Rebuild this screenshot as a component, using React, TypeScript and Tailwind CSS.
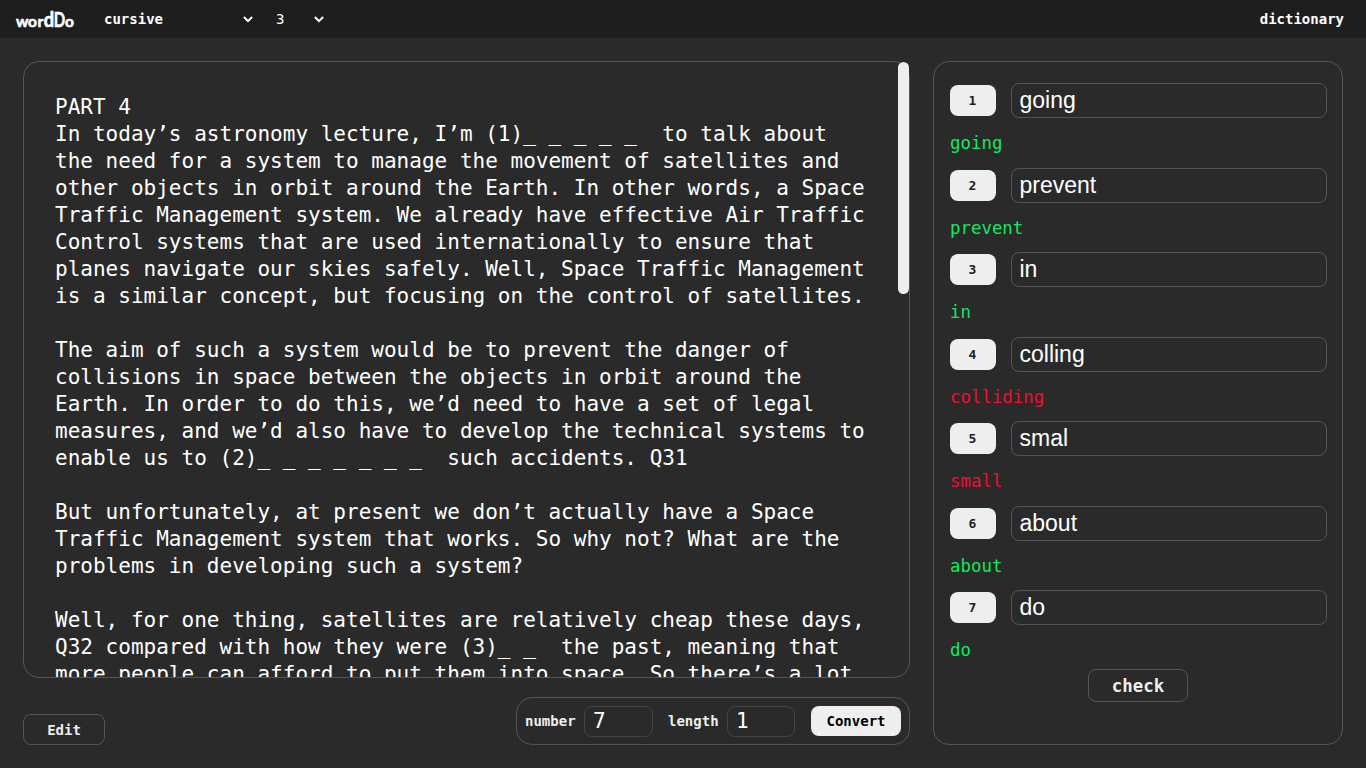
const mono = "font-['DejaVu_Sans_Mono',monospace]";

const lines = [
  "PART 4",
  "In today’s astronomy lecture, I’m (1)_ _ _ _ _  to talk about",
  "the need for a system to manage the movement of satellites and",
  "other objects in orbit around the Earth. In other words, a Space",
  "Traffic Management system. We already have effective Air Traffic",
  "Control systems that are used internationally to ensure that",
  "planes navigate our skies safely. Well, Space Traffic Management",
  "is a similar concept, but focusing on the control of satellites.",
  "",
  "The aim of such a system would be to prevent the danger of",
  "collisions in space between the objects in orbit around the",
  "Earth. In order to do this, we’d need to have a set of legal",
  "measures, and we’d also have to develop the technical systems to",
  "enable us to (2)_ _ _ _ _ _ _  such accidents. Q31",
  "",
  "But unfortunately, at present we don’t actually have a Space",
  "Traffic Management system that works. So why not? What are the",
  "problems in developing such a system?",
  "",
  "Well, for one thing, satellites are relatively cheap these days,",
  "Q32 compared with how they were (3)_ _  the past, meaning that",
  "more people can afford to put them into space. So there’s a lot",
];

const answers = [
  { typed: "going", correct: "going" },
  { typed: "prevent", correct: "prevent" },
  { typed: "in", correct: "in" },
  { typed: "colling", correct: "colliding" },
  { typed: "smal", correct: "small" },
  { typed: "about", correct: "about" },
  { typed: "do", correct: "do" },
];

function Chevron() {
  return (
    <svg width="10" height="7" viewBox="0 0 10 7" fill="none" stroke="#fff" strokeWidth="2">
      <path d="M0.9 1L5 5.1L9.1 1" />
    </svg>
  );
}

function Logo() {
  return (
    <svg
      className="ml-4 mr-[30px] shrink-0 overflow-visible"
      width="58"
      height="38"
      viewBox="0 0 58 38"
      fill="#fff"
      stroke="#fff"
      strokeWidth="0.6"
      strokeLinejoin="round"
      fontFamily="Lato, sans-serif"
      fontWeight="700"
    >
      <text y="26.5">
        <tspan x="0" fontSize="15.5">w</tspan>
        <tspan x="12" fontSize="15.5">o</tspan>
        <tspan x="21.5" fontSize="15.5">r</tspan>
      </text>
      <text transform="translate(27.7 26.5) scale(.92 1)" fontSize="20">d</text>
      <text transform="translate(37.8 26.5) scale(.7 1)" fontSize="21.5">D</text>
      <text x="49" y="26.5" fontSize="15.5">o</text>
    </svg>
  );
}

export default function App() {
  return (
    <div className={`flex h-[768px] w-[1366px] flex-col overflow-hidden bg-[#2a2a2a] text-white ${mono}`}>
      <header className="flex h-[38px] shrink-0 items-center bg-[#1e1e1e] text-[14px] leading-none">
        <Logo />
        <div className="flex w-[149px] items-center justify-between font-bold">
          <span>cursive</span>
          <Chevron />
        </div>
        <div className="ml-[23px] flex w-[48px] items-center justify-between">
          <span>3</span>
          <Chevron />
        </div>
        <span className="mr-[22px] ml-auto font-bold">dictionary</span>
      </header>

      <main className="flex min-h-0 flex-1 gap-[23px] px-[23px] pt-[23px] pb-[23px]">
        <section className="flex w-[887px] flex-col">
          <div className="relative h-[617px] shrink-0">
            <div className="h-full overflow-hidden rounded-2xl border border-[#555] px-[31px] pt-[31px]">
              {lines.map((l, i) => (
                <div key={i} className="h-[27px] text-[21.03px] leading-[27px] whitespace-pre">{l}</div>
              ))}
            </div>
            <div className="absolute top-px right-px h-[232px] w-[11px] rounded-full bg-[#eee]" />
          </div>
          <div className="mt-[19px] flex justify-between text-[14px] font-bold text-[#eee]">
            <button className="mt-[17px] h-[31px] w-[82px] rounded-lg border border-[#555] pt-px">Edit</button>
            <div className="flex h-[48px] w-[394px] items-center rounded-2xl border border-[#555] pl-2">
              <span className="w-[59px] shrink-0">number</span>
              <div className="flex h-[31px] w-[69px] shrink-0 items-center rounded-lg border border-[#444] pt-0.5 pl-2 text-[21px] font-normal text-white">7</div>
              <span className="ml-[15px] w-[59px] shrink-0">length</span>
              <div className="flex h-[31px] w-[68px] shrink-0 items-center rounded-lg border border-[#444] pt-0.5 pl-2 text-[21px] font-normal text-white">1</div>
              <button className="ml-4 h-[30px] w-[90px] shrink-0 rounded-lg bg-[#eee] text-black">Convert</button>
            </div>
          </div>
        </section>

        <section className="flex h-[684px] w-[410px] flex-col rounded-2xl border border-[#555] pt-[21.4px] pr-[15px] pl-4">
          {answers.map((a, i) => (
            <div key={i} className="h-[84.5px] shrink-0">
              <div className="flex h-[35px] items-center gap-[15px]">
                <div className="flex h-[31px] w-[46px] shrink-0 items-center justify-center rounded-lg bg-[#eee] pr-px text-[13px] font-bold text-[#1e1e1e]">
                  {i + 1}
                </div>
                <div className="flex h-[35px] w-[316px] shrink-0 items-center rounded-lg border border-[#555] pl-[7.5px] font-['Liberation_Sans',sans-serif] text-[23px] leading-none">
                  {a.typed}
                </div>
              </div>
              <div className={a.typed === a.correct ? "mt-[13.1px] text-[17.4px] leading-6 text-[#12e95f]" : "mt-[13.1px] text-[17.4px] leading-6 text-[#f50a32]"}>
                {a.correct}
              </div>
            </div>
          ))}
          <button className="mt-[-6px] mr-px h-[33px] w-[100px] shrink-0 self-center rounded-lg border border-[#555] pt-px text-[17.4px] font-bold text-[#eee]">
            check
          </button>
        </section>
      </main>
    </div>
  );
}
